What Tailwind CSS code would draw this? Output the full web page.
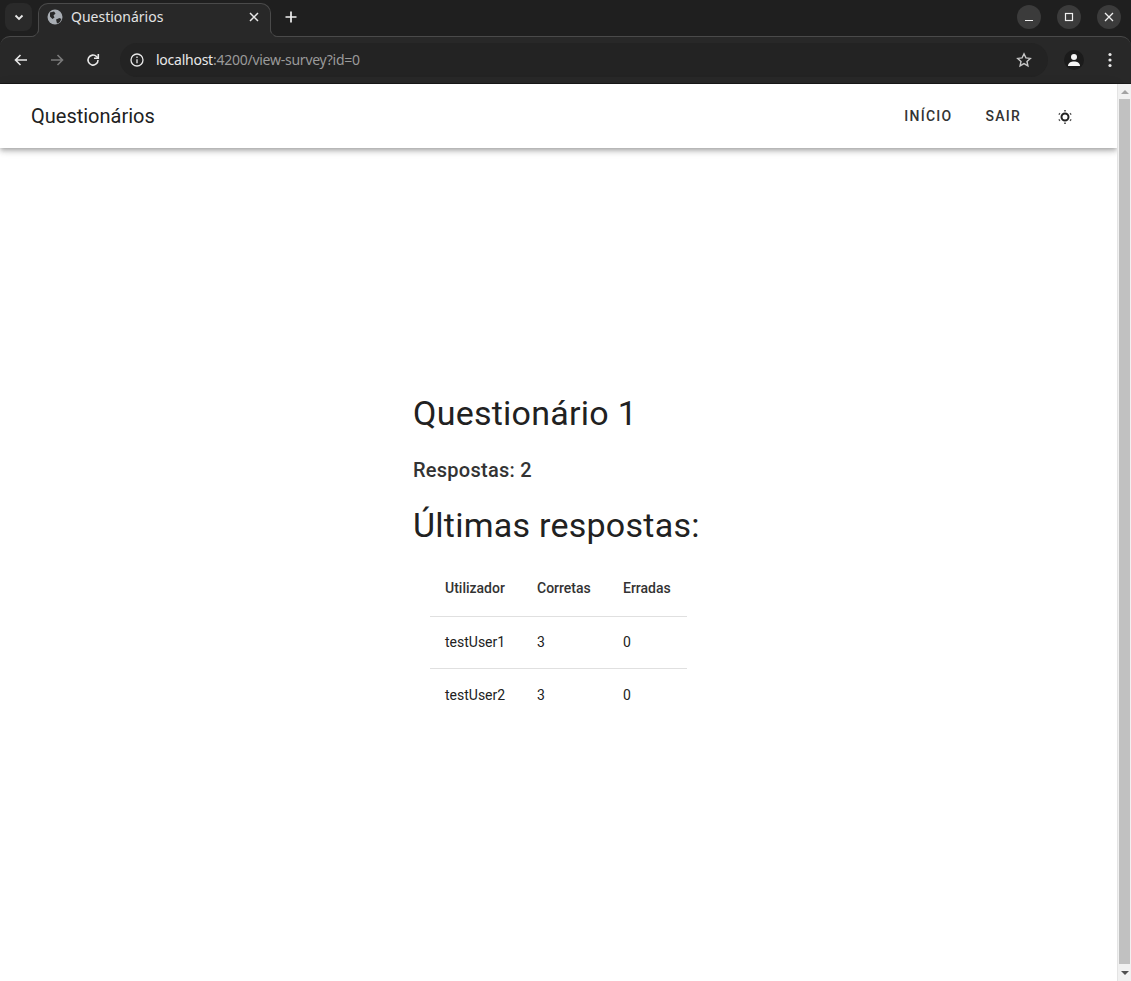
<!DOCTYPE html>
<html lang="pt">
<head>
  <meta charset="UTF-8" />
  <title>Questionários</title>
  <script src="https://cdn.jsdelivr.net/npm/@tailwindcss/browser@4"></script>
</head>
<body class="w-[1131px] h-[981px] overflow-hidden bg-white flex flex-col font-['Roboto',sans-serif] text-[#212121]">

  <!-- Browser chrome -->
  <div class="shrink-0 bg-[#1f1f1f]">
    <!-- Tab strip -->
    <div class="h-[36px] flex items-start relative">
      <div class="ml-[5px] mt-[3px] w-[27px] h-[28px] rounded-lg bg-[#2a2a2a] flex items-center justify-center">
        <svg width="12" height="12" viewBox="0 0 12 12" fill="none" stroke="#e8e8e8" stroke-width="1.8"><path d="M2.5 4.5 6 8l3.5-3.5" /></svg>
      </div>
      <!-- Active tab -->
      <div class="ml-[6px] mt-[3px] w-[233px] h-[34px] bg-[#282828] border border-b-0 border-[#4a4a4a] rounded-t-[10px] flex items-center pl-[8px] pr-[11px] pb-[8px] relative z-10">
        <svg width="16" height="16" viewBox="0 0 16 16" class="shrink-0">
          <circle cx="8" cy="8" r="7.5" fill="#a8adb3" />
          <path d="M3 3.5 7 2.5 8.5 4.5 6.5 6.5 7.5 8.5 5.5 10 3 7.5ZM9 10.5l3.5-1.5 2 1-2 3.5-2.5 1Z" fill="#282828" />
        </svg>
        <span class="ml-[8px] text-[14px] text-[#e3e3e3] font-['Noto_Sans',sans-serif] flex-1 leading-none">Questionários</span>
        <svg width="10" height="10" viewBox="0 0 10 10" fill="none" stroke="#e8e8e8" stroke-width="1.5"><path d="M1 1l8 8M9 1l-8 8" /></svg>
        <svg width="8" height="8" viewBox="0 0 8 8" class="absolute left-[-8px] bottom-0"><path d="M8 0V8H0C4 8 8 5 8 0Z" fill="#282828" /><path d="M7.5 0C7.5 4.5 4 7.5 0 7.5" fill="none" stroke="#4a4a4a" /></svg>
        <svg width="8" height="8" viewBox="0 0 8 8" class="absolute right-[-8px] bottom-0"><path d="M0 0V8H8C4 8 0 5 0 0Z" fill="#282828" /><path d="M.5 0C.5 4.5 4 7.5 8 7.5" fill="none" stroke="#4a4a4a" /></svg>
      </div>
      <svg width="14" height="14" viewBox="0 0 14 14" fill="none" stroke="#f0f0f0" stroke-width="1.7" class="ml-[13px] mt-[10px]"><path d="M7 1.5v11M1.5 7h11" /></svg>
      <!-- Window controls -->
      <div class="ml-auto mr-[10px] mt-[5px] flex gap-[16px]">
        <div class="w-[24px] h-[24px] rounded-full bg-[#3b3b3b] flex items-center justify-center">
          <svg width="10" height="10" viewBox="0 0 10 10" stroke="#f0f0f0" stroke-width="1"><path d="M1 8.5h8" /></svg>
        </div>
        <div class="w-[24px] h-[24px] rounded-full bg-[#3b3b3b] flex items-center justify-center">
          <svg width="10" height="10" viewBox="0 0 10 10" fill="none" stroke="#f0f0f0" stroke-width="1.2"><rect x="1.5" y="1.5" width="7" height="7" /></svg>
        </div>
        <div class="w-[24px] h-[24px] rounded-full bg-[#3b3b3b] flex items-center justify-center">
          <svg width="10" height="10" viewBox="0 0 10 10" fill="none" stroke="#f0f0f0" stroke-width="1.3"><path d="M1 1l8 8M9 1l-8 8" /></svg>
        </div>
      </div>
    </div>

    <!-- Toolbar -->
    <div class="h-[47px] bg-[#282828] border-t border-[#4a4a4a] rounded-t-[10px] flex items-center">
      <svg width="16" height="16" viewBox="0 0 16 16" fill="none" stroke="#e8e8e8" stroke-width="1.6" class="ml-[13px]"><path d="M14 8H3M7.5 3 2.5 8l5 5" /></svg>
      <svg width="16" height="16" viewBox="0 0 16 16" fill="none" stroke="#7a7a7a" stroke-width="1.6" class="ml-[20px]"><path d="M2 8h11M8.5 3l5 5-5 5" /></svg>
      <svg width="16" height="16" viewBox="0 0 16 16" fill="none" stroke="#e8e8e8" stroke-width="1.6" class="ml-[20px]"><path d="M13 8a5 5 0 1 1-1.5-3.5L13 6" /><path d="M13.3 2v4.3H9" /></svg>
      <!-- Address bar -->
      <div class="ml-[19px] w-[928px] h-[34px] rounded-full bg-[#232323] flex items-center pl-[9px] pr-[16px]">
        <svg width="16" height="16" viewBox="0 0 16 16" fill="none" stroke="#e8e8e8" stroke-width="1.3"><circle cx="8" cy="8" r="6" /><path d="M8 7.2v4M8 4.6v1.4" /></svg>
        <span class="ml-[11px] text-[14px] leading-none font-['Noto_Sans',sans-serif] text-[#e8e8e8] tracking-[-0.25px]">localhost<span class="text-[#9a9a9a]">:4200/view-survey?id=0</span></span>
        <svg width="16" height="16" viewBox="0 0 16 16" fill="none" stroke="#c8c8c8" stroke-width="1.4" class="ml-auto"><path d="M8 1.8l1.9 4.1 4.4.5-3.3 3 .9 4.4L8 11.6l-3.9 2.2.9-4.4-3.3-3 4.4-.5Z" /></svg>
      </div>
      <div class="ml-[16px] w-[20px] h-[20px] rounded-full bg-[#1b1b1b] flex items-center justify-center">
        <svg width="14" height="14" viewBox="0 0 14 14" fill="#f5f5f5"><circle cx="7" cy="4" r="3" /><path d="M1 13c0-3.2 3-4.6 6-4.6s6 1.4 6 4.6Z" /></svg>
      </div>
      <svg width="4" height="16" viewBox="0 0 4 16" fill="#e8e8e8" class="ml-[24px]"><circle cx="2" cy="2.5" r="1.6" /><circle cx="2" cy="8" r="1.6" /><circle cx="2" cy="13.5" r="1.6" /></svg>
    </div>
  </div>

  <!-- Page -->
  <div class="flex-1 flex min-h-0 bg-white border-t border-[#1a1a1a]">
    <div class="flex-1 flex flex-col min-w-0">
      <!-- App bar -->
      <header class="h-[64px] shrink-0 bg-white flex items-center pl-[31px] shadow-[0_2px_4px_-1px_rgba(0,0,0,0.2),0_4px_5px_0_rgba(0,0,0,0.14),0_1px_10px_0_rgba(0,0,0,0.12)]">
        <span class="text-[20px] font-normal">Questionários</span>
        <nav class="ml-auto flex items-center text-[14px] font-medium tracking-[1.25px] text-[#333333]">
          <span>INÍCIO</span>
          <span class="ml-[33px]">SAIR</span>
          <svg width="16" height="16" viewBox="0 0 16 16" fill="none" stroke="#212121" class="ml-[36px] mr-[44px] mt-[1px]">
            <circle cx="8" cy="8" r="3.5" stroke-width="2" />
            <path d="M8 1v1.4M8 13.6V15M1.8 4.6l1.2.7M13 10.7l1.2.7M1.8 11.4l1.2-.7M13 5.3l1.2-.7" stroke-width="1.8" stroke="#555555" />
          </svg>
        </nav>
      </header>

      <!-- Survey details -->
      <main class="pl-[413px] pt-[240px]">
        <h1 class="text-[34px] leading-[50px] font-normal tracking-[0.25px]">Questionário 1</h1>
        <h3 class="mt-[18px] text-[20px] leading-[28px] font-medium tracking-[0.25px] text-[#333333]">Respostas: 2</h3>
        <h1 class="mt-[16px] text-[34px] leading-[50px] font-normal tracking-[0.25px]">Últimas respostas:</h1>
        <table class="ml-[17px] mt-[11px] w-[257px] table-fixed border-collapse text-[14px] text-left">
          <thead class="text-[#333333]">
            <tr class="h-[55px] border-b border-[#e0e0e0]">
              <th class="pl-[15px] w-[92px] font-medium">Utilizador</th>
              <th class="pl-[15px] w-[86px] font-medium">Corretas</th>
              <th class="pl-[15px] font-medium">Erradas</th>
            </tr>
          </thead>
          <tbody>
            <tr class="h-[52px] border-b border-[#e0e0e0]">
              <td class="pl-[15px]">testUser1</td>
              <td class="pl-[15px]">3</td>
              <td class="pl-[15px]">0</td>
            </tr>
            <tr class="h-[54px]">
              <td class="pl-[15px]">testUser2</td>
              <td class="pl-[15px]">3</td>
              <td class="pl-[15px]">0</td>
            </tr>
          </tbody>
        </table>
      </main>
    </div>

    <!-- Scrollbar -->
    <div class="w-[14px] shrink-0 bg-[#f1f1f1] border-l border-[#e4e4e4] flex flex-col items-center">
      <div class="h-[15px] shrink-0 flex items-center justify-center">
        <div class="w-0 h-0 border-x-[4px] border-x-transparent border-b-[4px] border-b-[#a3a3a3]"></div>
      </div>
      <div class="flex-1 w-[11px] bg-[#c1c1c1]"></div>
      <div class="h-[17px] shrink-0 flex items-center justify-center">
        <div class="w-0 h-0 border-x-[4px] border-x-transparent border-t-[4px] border-t-[#505050]"></div>
      </div>
    </div>
  </div>
</body>
</html>
